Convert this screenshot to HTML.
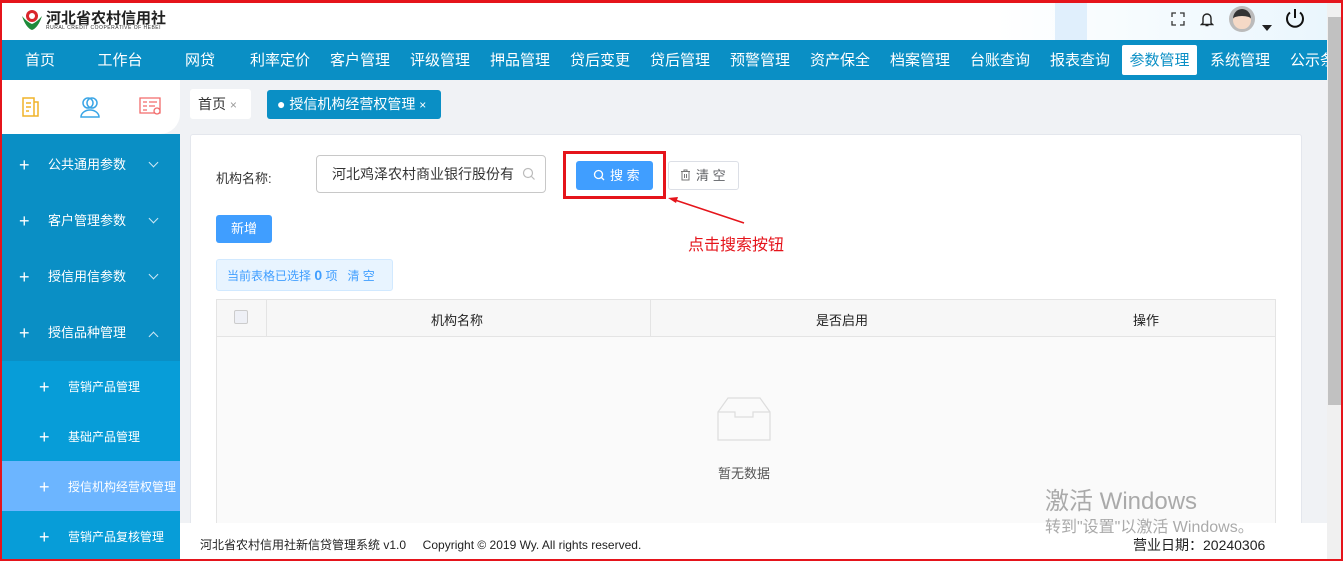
<!DOCTYPE html>
<html><head><meta charset="utf-8"><style>
*{margin:0;padding:0;box-sizing:border-box}
body{width:1343px;height:561px;overflow:hidden;font-family:"Liberation Sans","Noto Sans CJK SC",sans-serif;background:#f0f2f5;position:relative}
.a{position:absolute}
.nav span{position:absolute;top:0;height:40px;line-height:41px;width:80px;text-align:center;color:#fff;font-size:15px;white-space:nowrap}
.side div{position:absolute;left:0;width:180px;color:#fff;font-size:13px;white-space:nowrap;overflow:hidden}
.side .s{font-size:12px}
.side b{position:absolute;font-weight:normal;font-size:18px}
.chev{position:absolute;left:150px;width:7px;height:7px;border-right:1.2px solid #cfe8f5;border-bottom:1.2px solid #cfe8f5;transform:rotate(45deg)}
</style></head><body>
<!-- header -->
<div class="a" style="left:0;top:0;width:1327px;height:40px;background:linear-gradient(90deg,#fff 0,#fff 75%,#eaf6fd 100%)"></div>
<div class="a" style="left:1055px;top:0;width:32px;height:40px;background:#e0effc"></div>
<svg class="a" style="left:20px;top:8px" width="24" height="24" viewBox="0 0 24 24"><path d="M2 8 Q6 20 12 22 Q18 20 22 8 Q17 14 12 16 Q7 14 2 8Z" fill="#1e8a3a"/><circle cx="12" cy="8" r="6" fill="#d9262b"/><circle cx="12" cy="8" r="3" fill="#fff"/></svg>
<div class="a" style="left:46px;top:7px;font-size:15px;font-weight:bold;color:#222">河北省农村信用社</div>
<div class="a" style="left:46px;top:25px;font-size:5px;color:#333;letter-spacing:.5px">RURAL CREDIT COOPERATIVE OF HEBEI</div>
<svg class="a" style="left:1171px;top:12px" width="14" height="14" viewBox="0 0 14 14"><path d="M1 5V1h4M9 1h4v4M13 9v4H9M5 13H1V9" fill="none" stroke="#333" stroke-width="1.3"/></svg>
<svg class="a" style="left:1200px;top:11px" width="14" height="16" viewBox="0 0 14 16"><path d="M3 12V7a4 4 0 0 1 8 0v5l1.5 1.5h-11Z M5.5 14.5h3" fill="none" stroke="#222" stroke-width="1.4"/></svg>
<div class="a" style="left:1229px;top:6px;width:26px;height:26px;border-radius:50%;background:#bbb"></div>
<div class="a" style="left:1233px;top:9px;width:18px;height:20px;border-radius:50% 50% 45% 45%;background:#f5d9c6;border-top:7px solid #333"></div>
<div class="a" style="left:1262px;top:25px;width:0;height:0;border:5px solid transparent;border-top:6px solid #222"></div>
<svg class="a" style="left:1284px;top:7px" width="22" height="22" viewBox="0 0 22 22"><path d="M6 5.5A8 8 0 1 0 16 5.5M11 2v9" fill="none" stroke="#111" stroke-width="2"/></svg>
<!-- nav -->
<div class="a nav" style="left:0;top:40px;width:1327px;height:40px;background:#0a8fc5;overflow:hidden">
<span style="left:0">首页</span><span style="left:80px">工作台</span><span style="left:160px">网贷</span><span style="left:240px">利率定价</span><span style="left:320px">客户管理</span><span style="left:400px">评级管理</span><span style="left:480px">押品管理</span><span style="left:560px">贷后变更</span><span style="left:640px">贷后管理</span><span style="left:720px">预警管理</span><span style="left:800px">资产保全</span><span style="left:880px">档案管理</span><span style="left:960px">台账查询</span><span style="left:1040px">报表查询</span>
<span style="left:1122px;top:5px;height:30px;line-height:31px;width:75px;background:#fff;color:#0a8fc5;border-radius:2px">参数管理</span>
<span style="left:1200px">系统管理</span><span style="left:1280px;text-align:left;padding-left:10px">公示条</span>
</div>
<!-- sidebar top icons -->
<div class="a" style="left:0;top:80px;width:180px;height:54px;background:#fff;border-radius:0 0 20px 0"></div>
<svg class="a" style="left:20px;top:96px" width="22" height="22" viewBox="0 0 22 22"><path d="M3 2h11v18H3Z M14 6h4v14h-4 M6 7h5M6 11h5M6 15h3" fill="none" stroke="#f0b429" stroke-width="1.5"/></svg>
<svg class="a" style="left:78px;top:95px" width="24" height="24" viewBox="0 0 24 24"><circle cx="10" cy="8" r="5" fill="none" stroke="#3aa5e6" stroke-width="1.5"/><circle cx="14" cy="8" r="5" fill="none" stroke="#3aa5e6" stroke-width="1.5"/><path d="M3 22a9 7 0 0 1 18 0Z" fill="none" stroke="#3aa5e6" stroke-width="1.5"/></svg>
<svg class="a" style="left:139px;top:97px" width="24" height="20" viewBox="0 0 24 20"><path d="M1 1h20v15H1Z M4 5h4M10 5h8M4 9h4M10 9h6M4 13h4" fill="none" stroke="#f26b6b" stroke-width="1.3"/><circle cx="18" cy="14" r="3" fill="#fff" stroke="#f26b6b" stroke-width="1.3"/></svg>
<!-- tabs -->
<div class="a" style="left:190px;top:89px;width:61px;height:30px;background:#fff;border-radius:3px;font-size:14px;color:#333;line-height:30px;padding-left:8px">首页 <span style="color:#999;font-size:12px">×</span></div>
<div class="a" style="left:267px;top:90px;width:174px;height:29px;background:#0a8fc5;border-radius:3px;font-size:14px;color:#fff;line-height:29px;padding-left:10px;white-space:nowrap">● 授信机构经营权管理 <span style="font-size:12px">×</span></div>
<!-- sidebar -->
<div class="a side" style="left:0;top:134px;width:180px;height:427px;background:#0a8fc5;overflow:hidden">
<div style="top:0;height:56px;line-height:62px"><b style="left:19px">+</b><span style="margin-left:48px">公共通用参数</span></div><i class="chev" style="top:25px"></i>
<div style="top:56px;height:56px;line-height:62px"><b style="left:19px">+</b><span style="margin-left:48px">客户管理参数</span></div><i class="chev" style="top:81px"></i>
<div style="top:112px;height:56px;line-height:62px"><b style="left:19px">+</b><span style="margin-left:48px">授信用信参数</span></div><i class="chev" style="top:137px"></i>
<div style="top:168px;height:56px;line-height:62px"><b style="left:19px">+</b><span style="margin-left:48px">授信品种管理</span></div><i class="chev" style="top:199px;transform:rotate(225deg)"></i>
<div style="top:227px;height:200px;background:#079dd8"></div>
<div class="s" style="top:227px;height:50px;line-height:52px"><b style="left:39px">+</b><span style="margin-left:68px">营销产品管理</span></div>
<div class="s" style="top:277px;height:50px;line-height:52px"><b style="left:39px">+</b><span style="margin-left:68px">基础产品管理</span></div>
<div class="s" style="top:327px;height:50px;line-height:52px;background:#6cb5ff"><b style="left:39px">+</b><span style="margin-left:68px">授信机构经营权管理</span></div>
<div class="s" style="top:377px;height:50px;line-height:52px"><b style="left:39px">+</b><span style="margin-left:68px">营销产品复核管理</span></div>
</div>
<!-- card -->
<div class="a" style="left:190px;top:134px;width:1112px;height:400px;background:#fff;border:1px solid #e4e7ed;border-radius:3px"></div>
<div class="a" style="left:216px;top:168px;font-size:13px;color:#333">机构名称:</div>
<div class="a" style="left:316px;top:155px;width:230px;height:38px;border:1px solid #c8c8c8;border-radius:4px;font-size:14px;color:#333;line-height:36px;padding-left:15px;white-space:nowrap">河北鸡泽农村商业银行股份有</div>
<svg class="a" style="left:522px;top:167px" width="14" height="14" viewBox="0 0 14 14"><circle cx="6" cy="6" r="4.5" fill="none" stroke="#bbb" stroke-width="1.2"/><path d="M9.5 9.5L12.5 12.5" stroke="#bbb" stroke-width="1.2"/></svg>
<div class="a" style="left:563px;top:151px;width:103px;height:48px;border:3px solid #e5141b"></div>
<div class="a" style="left:576px;top:161px;width:77px;height:29px;background:#409eff;border-radius:3px;color:#fff;font-size:13px;line-height:29px;padding-left:34px;white-space:nowrap">搜 索</div>
<svg class="a" style="left:593px;top:169px" width="12" height="12" viewBox="0 0 12 12"><circle cx="5.5" cy="5.5" r="4" fill="none" stroke="#fff" stroke-width="1.3"/><path d="M8.5 8.5L11 11" stroke="#fff" stroke-width="1.3"/></svg>
<div class="a" style="left:668px;top:161px;width:71px;height:29px;border:1px solid #dcdfe6;border-radius:3px;color:#606266;font-size:13px;line-height:27px;padding-left:27px">清 空</div>
<svg class="a" style="left:680px;top:169px" width="11" height="12" viewBox="0 0 11 12"><path d="M1 2.5h9M4 2.5V1h3v1.5M2 2.5V11h7V2.5M4.5 5v4M6.5 5v4" fill="none" stroke="#777" stroke-width="1"/></svg>
<svg class="a" style="left:665px;top:195px" width="82" height="30"><path d="M79 28 L7 4" stroke="#e5141b" stroke-width="1.5"/><path d="M3 3 L13 2 L11 8Z" fill="#e5141b"/></svg>
<div class="a" style="left:688px;top:231px;font-size:16px;color:#e5141b">点击搜索按钮</div>
<div class="a" style="left:216px;top:215px;width:56px;height:28px;background:#409eff;border-radius:3px;color:#fff;font-size:13px;line-height:28px;text-align:center">新增</div>
<div class="a" style="left:216px;top:259px;width:177px;height:32px;background:#e8f4ff;border:1px solid #d1e9ff;border-radius:3px;color:#409eff;font-size:12px;line-height:30px;padding-left:10px">当前表格已选择 <b style="font-size:14px">0</b> 项 &nbsp; 清 空</div>
<!-- table -->
<div class="a" style="left:216px;top:299px;width:1060px;height:230px;border:1px solid #e4e4e4;background:#fafafa"></div>
<div class="a" style="left:216px;top:299px;width:1060px;height:38px;border:1px solid #e4e4e4;background:#f7f7f7;font-size:13px;color:#222">
<div class="a" style="left:17px;top:10px;width:14px;height:14px;border:1px solid #ccc;background:#eef0f6;border-radius:2px"></div>
<div class="a" style="left:49px;top:0;width:1px;height:36px;background:#e4e4e4"></div>
<div class="a" style="left:433px;top:0;width:1px;height:36px;background:#e4e4e4"></div>
<div class="a" style="left:190px;top:10px;width:100px;text-align:center">机构名称</div>
<div class="a" style="left:575px;top:10px;width:100px;text-align:center">是否启用</div>
<div class="a" style="left:879px;top:10px;width:100px;text-align:center">操作</div>
</div>
<svg class="a" style="left:715px;top:395px" width="60" height="50" viewBox="0 0 60 50"><path d="M3 17 L13 3 H45 L55 17 V45 H3Z M3 17 H20 V22 H38 V17 H55" fill="none" stroke="#ddd" stroke-width="1.2"/></svg>
<div class="a" style="left:718px;top:463px;font-size:13px;color:#555">暂无数据</div>
<!-- footer -->
<div class="a" style="left:180px;top:523px;width:1147px;height:38px;background:#fff"></div>
<div class="a" style="left:200px;top:536px;font-size:12px;color:#222">河北省农村信用社新信贷管理系统 v1.0 &nbsp;&nbsp;&nbsp; Copyright © 2019 Wy. All rights reserved.</div>
<div class="a" style="left:1133px;top:535px;font-size:14px;color:#222">营业日期：20240306</div>
<div class="a" style="left:1045px;top:481px;font-size:24px;color:#aaa">激活 Windows</div>
<div class="a" style="left:1045px;top:513px;font-size:16px;color:#aaa">转到"设置"以激活 Windows。</div>
<!-- scrollbar -->
<div class="a" style="left:1327px;top:0;width:16px;height:561px;background:#f0f0f0"></div>
<div class="a" style="left:1328px;top:17px;width:13px;height:388px;background:#c1c1c1"></div>
<!-- red border -->
<div class="a" style="left:0;top:0;width:1343px;height:561px;border:2px solid #e5141b;border-top-width:3px"></div>
</body></html>
